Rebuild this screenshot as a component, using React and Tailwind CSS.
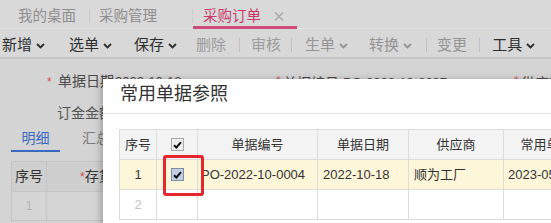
import React from "react";

const Chev = ({ c }) => (
  <svg width="9" height="6" viewBox="0 0 9 6" className="ml-[4px] mt-[1px] shrink-0">
    <path d="M1 1L4.5 4.5L8 1" fill="none" stroke={c} strokeWidth="1.8" />
  </svg>
);

const Sep = ({ ml }) => <div className={`${ml} mt-[2px] h-[14px] w-px shrink-0 bg-[#c2c2c2]`} />;

const Box = ({ blue }) => (
  <div
    className={`w-[13px] h-[13px] shrink-0 border flex items-center justify-center ${
      blue ? "border-[#7f8ca3] bg-[#c3cfe3]" : "border-[#a9a9a9] bg-[#eeeeee]"
    }`}
  >
    <svg width="9" height="8" viewBox="0 0 9 8">
      <path d="M1 4.2L3.4 6.5L8 1.2" fill="none" stroke="#111" strokeWidth="2" />
    </svg>
  </div>
);

export default function App() {
  const dark = "#2e2e2e";
  const dim = "#949494";
  return (
    <div className="relative w-[551px] h-[223px] overflow-hidden whitespace-nowrap bg-[#d4d4d4] font-['Liberation_Sans','Noto_Sans_CJK_SC',sans-serif]">
      {/* tab bar */}
      <div className="h-[29px] bg-[#d9d9d9] border-b border-[#e3e3e3] flex items-start text-[14.5px] leading-[18px] [&>*]:shrink-0">
        <div className="ml-[18px] mt-[7px] text-[#8e8e8e]">我的桌面</div>
        <div className="ml-[13px] mt-[9px] h-[14px] w-px bg-[#cbcbcb]" />
        <div className="ml-[9px] mt-[7px] text-[#8e8e8e]">采购管理</div>
        <div className="ml-[35px] mt-[9px] h-[14px] w-px bg-[#cbcbcb]" />
        <div className="w-[104px] h-[29px] border-b-[3px] border-[#cf4a7b] flex items-start pl-[10px] pt-[7px]">
          <span className="text-[#c93a6b]">采购订单</span>
          <svg width="10" height="9" viewBox="0 0 10 9" className="ml-[13px] mt-[5px]">
            <path d="M1 0.5L9 8.5M9 0.5L1 8.5" stroke="#a6a6a6" strokeWidth="1.3" />
          </svg>
        </div>
      </div>

      {/* toolbar */}
      <div className="h-[30px] bg-[#d8d8d8] border-b-[2px] border-[#c5c5c5] flex items-start pt-[7px] text-[15px] leading-[18px] [&>*]:shrink-0">
        <div className="ml-[2px] flex items-center" style={{ color: dark }}>新增<Chev c={dark} /></div>
        <div className="ml-[24px] flex items-center" style={{ color: dark }}>选单<Chev c={dark} /></div>
        <div className="ml-[22px] flex items-center" style={{ color: dark }}>保存<Chev c={dark} /></div>
        <div className="ml-[19px] text-[#9c9c9c]">删除</div>
        <Sep ml="ml-[13px]" />
        <div className="ml-[11px] text-[#9c9c9c]">审核</div>
        <Sep ml="ml-[10px]" />
        <div className="ml-[13px] flex items-center" style={{ color: dim }}>生单<Chev c={dim} /></div>
        <div className="ml-[21px] flex items-center" style={{ color: dim }}>转换<Chev c={dim} /></div>
        <Sep ml="ml-[14px]" />
        <div className="ml-[10px]" style={{ color: dim }}>变更</div>
        <Sep ml="ml-[12px]" />
        <div className="ml-[12px] flex items-center" style={{ color: dark }}>工具<Chev c={dark} /></div>
        <div className="ml-[18px] -mt-[5px] h-[26px] w-[6px] bg-[#e2e2e2] rounded-l-[2px]" />
      </div>

      {/* form */}
      <div className="h-[65px] pt-[13px] text-[14px] leading-[18px] text-[#4a4a4a]">
        <div className="flex items-start [&>*]:shrink-0">
          <div className="ml-[47px] w-[11px] text-[#e05050] text-[12px] leading-[12px] mt-[4px]">*</div>
          <div className="w-[57px]">单据日期</div>
          <div className="text-[13px] mt-[1px] w-[70px]">2022-10-18</div>
          <div className="ml-[91px] w-[7px] text-[#e05050] text-[12px] leading-[12px] mt-[3px]">*</div>
          <div className="w-[60px] mt-[2px]">单据编号</div>
          <div className="text-[13px] mt-[2px] w-[110px]">PO-2022-10-0007</div>
          <div className="ml-[61px] w-[7px] text-[#e05050] text-[12px] leading-[12px] mt-[3px]">*</div>
          <div className="mt-[2px]">供应商</div>
        </div>
        <div className="ml-[57px] mt-[12px] text-[#555]">订金金额</div>
      </div>

      {/* detail tabs */}
      <div className="h-[28px] flex items-start text-[14px] leading-[18px] [&>*]:shrink-0">
        <div className="ml-[11px] w-[49px] h-[28px] border-b-[2px] border-[#3a69c2] pt-[5px] text-center text-[#3a69c2]">明细</div>
        <div className="ml-[22px] pt-[5px] text-[#7a7a7a]">汇总</div>
      </div>

      {/* page table */}
      <div className="ml-[11px] mt-[9px] border-l border-t border-[#c4c4c4] text-[14px]">
        <div className="flex h-[30px] bg-[#cfcfcf] border-b border-[#c4c4c4] [&>*]:shrink-0">
          <div className="w-[35px] border-r border-[#c4c4c4] flex items-center justify-center text-[#333]">序号</div>
          <div className="pl-[33px] flex items-center text-[#333]">
            <span className="text-[#d24a4a] text-[12px]">*</span>存货编码
          </div>
        </div>
        <div className="flex h-[29px] bg-[#d5d5d5] border-b border-[#c4c4c4]">
          <div className="w-[35px] shrink-0 border-r border-[#c4c4c4] flex items-center justify-center text-[#b5b5b5] text-[13px]">1</div>
        </div>
      </div>

      {/* modal */}
      <div className="absolute left-[103px] top-[79px] w-[560px] h-[150px] bg-white shadow-[-3px_0_6px_rgba(0,0,0,0.22)]">
        <div className="h-[35px] border-b border-[#e5e5e5] pl-[17px] pt-[3px] text-[18px] leading-[24px] text-[#333]">
          常用单据参照
        </div>
        <div className="ml-[16px] mt-[15px] w-[540px] border-l border-t border-[#dcdcdc] text-[13px] text-[#333]">
          <div className="flex h-[30px] bg-[#f3f3f3] border-b border-[#dcdcdc] [&>*]:shrink-0">
            <div className="w-[37px] border-r border-[#dcdcdc] flex items-center justify-center">序号</div>
            <div className="w-[41px] border-r border-[#dcdcdc] flex items-center justify-center"><Box /></div>
            <div className="w-[120px] border-r border-[#dcdcdc] flex items-center justify-center">单据编号</div>
            <div className="w-[91px] border-r border-[#dcdcdc] flex items-center justify-center">单据日期</div>
            <div className="w-[95px] border-r border-[#dcdcdc] flex items-center justify-center">供应商</div>
            <div className="w-[112px] border-r border-[#dcdcdc] flex items-center justify-center">常用单据日期</div>
          </div>
          <div className="flex h-[30px] bg-[#fdf6d9] border-b border-[#dcdcdc] [&>*]:shrink-0">
            <div className="w-[37px] border-r border-[#dcdcdc] flex items-center justify-center">1</div>
            <div className="relative w-[41px] border-r border-[#dcdcdc] flex items-center justify-center">
              <Box blue />
              <div className="absolute left-[6px] -top-[5px] w-[41px] h-[41px] border-[3px] border-[#e5262c] rounded-[3px]" />
            </div>
            <div className="w-[120px] border-r border-[#dcdcdc] flex items-center pl-[3px]">PO-2022-10-0004</div>
            <div className="w-[91px] border-r border-[#dcdcdc] flex items-center pl-[5px]">2022-10-18</div>
            <div className="w-[95px] border-r border-[#dcdcdc] flex items-center pl-[5px]">顺为工厂</div>
            <div className="w-[112px] border-r border-[#dcdcdc] flex items-center pl-[4px]">2023-05-16</div>
          </div>
          <div className="flex h-[30px] border-b border-[#dcdcdc] [&>*]:shrink-0">
            <div className="w-[37px] border-r border-[#dcdcdc] flex items-center justify-center text-[#c4c4c4]">2</div>
            <div className="w-[41px] border-r border-[#dcdcdc]" />
            <div className="w-[120px] border-r border-[#dcdcdc]" />
            <div className="w-[91px] border-r border-[#dcdcdc]" />
            <div className="w-[95px] border-r border-[#dcdcdc]" />
            <div className="w-[112px] border-r border-[#dcdcdc]" />
          </div>
        </div>
      </div>
    </div>
  );
}
